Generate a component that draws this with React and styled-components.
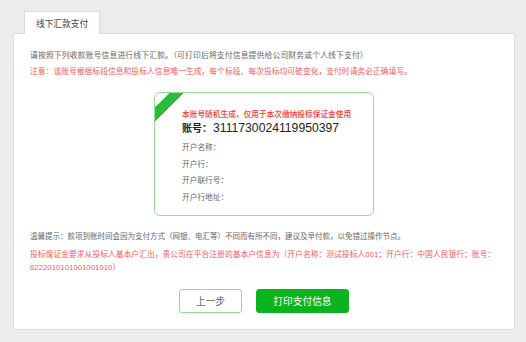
import React from "react";
import styled, { createGlobalStyle } from "styled-components";

const Global = createGlobalStyle`
  html, body { margin: 0; padding: 0; background: #ececec; }
  body { font-family: "Liberation Sans", "Noto Sans CJK SC", sans-serif; }
  * { box-sizing: border-box; }
`;

const Page = styled.div`
  padding: 11px 11px 12px 13px;
  width: 526px;
`;

const TabBar = styled.div`
  display: flex;
  padding-left: 11px;
  position: relative;
  z-index: 1;
  margin-bottom: -1px;
`;

const Tab = styled.div`
  width: 76px;
  height: 23px;
  background: #fff;
  border: 1px solid #dcdcdc;
  border-bottom: none;
  display: flex;
  align-items: center;
  justify-content: center;
  font-size: 8.7px;
  color: #444;
`;

const Panel = styled.div`
  width: 502px;
  background: #fff;
  border: 1px solid #dcdcdc;
  padding: 15px 16px 16px 16px;
  display: flex;
  flex-direction: column;
`;

const Text = styled.p`
  margin: ${(p) => p.$mt || 0}px 0 0 0;
  font-size: ${(p) => p.$size || 7.8}px;
  line-height: 13px;
  color: ${(p) => (p.$red ? "#fb5a5a" : "#666")};
  letter-spacing: ${(p) => p.$ls || 0}px;
`;

const Card = styled.div`
  align-self: center;
  margin-top: 14px;
  margin-bottom: 14px;
  width: 220px;
  height: 124px;
  border: 1px solid #96dd96;
  border-radius: 6px;
  background-color: #fff;
  background-image: linear-gradient(
    135deg,
    #fff 10.5px,
    #2cbb3c 10.5px,
    #2cbb3c 20.5px,
    #fff 20.5px
  );
  padding: 16px 10px 0 27px;
  display: flex;
  flex-direction: column;
`;

const CardTitle = styled.div`
  font-size: 7.7px;
  line-height: 12px;
  color: #f23c3c;
  font-weight: 500;
`;

const Account = styled.div`
  display: flex;
  align-items: baseline;
  margin-top: 0;
  margin-bottom: 4px;
  color: #222;
  line-height: 15px;
`;

const AccountLabel = styled.span`
  font-size: 10px;
  font-weight: bold;
  margin-right: 1px;
`;

const AccountNo = styled.span`
  font-size: 12.2px;
`;

const Field = styled.div`
  font-size: 7.7px;
  line-height: 16.7px;
  color: #666;
`;

const Buttons = styled.div`
  display: flex;
  justify-content: center;
  gap: 14px;
  margin-top: 15px;
`;

const Button = styled.button`
  height: 24px;
  width: ${(p) => p.$w}px;
  border-radius: 3px;
  font-family: inherit;
  font-size: 9.7px;
  padding: 0;
  cursor: pointer;
  border: 1px solid ${(p) => (p.$primary ? "#0bb41f" : "#8edc8e")};
  background: ${(p) => (p.$primary ? "#0bb41f" : "#fff")};
  color: ${(p) => (p.$primary ? "#fff" : "#666")};
`;

export default function App() {
  return (
    <>
      <Global />
      <Page>
        <TabBar>
          <Tab>线下汇款支付</Tab>
        </TabBar>
        <Panel>
          <Text $ls={0.15}>
            请按照下列收款账号信息进行线下汇款。（可打印后将支付信息提供给公司财务或个人线下支付）
          </Text>
          <Text $red $mt={3}>
            注意：该账号根据标段信息和投标人信息唯一生成，每个标段、每次投标均可能变化，支付时请务必正确填写。
          </Text>
          <Card>
            <CardTitle>本账号随机生成，仅用于本次缴纳投标保证金使用</CardTitle>
            <Account>
              <AccountLabel>账号：</AccountLabel>
              <AccountNo>3111730024119950397</AccountNo>
            </Account>
            <Field>开户名称：</Field>
            <Field>开户行：</Field>
            <Field>开户联行号：</Field>
            <Field>开户行地址：</Field>
          </Card>
          <Text $size={7.5}>
            温馨提示：款项到账时间会因为支付方式（网银、电汇等）不同而有所不同，建议及早付款，以免错过操作节点。
          </Text>
          <Text $red $mt={5}>
            投标保证金要求从投标人基本户汇出，贵公司在平台注册的基本户信息为（开户名称：测试投标人001；开户行：中国人民银行；账号：6222010101001001010）
          </Text>
          <Buttons>
            <Button $w={63}>上一步</Button>
            <Button $w={93} $primary>打印支付信息</Button>
          </Buttons>
        </Panel>
      </Page>
    </>
  );
}
